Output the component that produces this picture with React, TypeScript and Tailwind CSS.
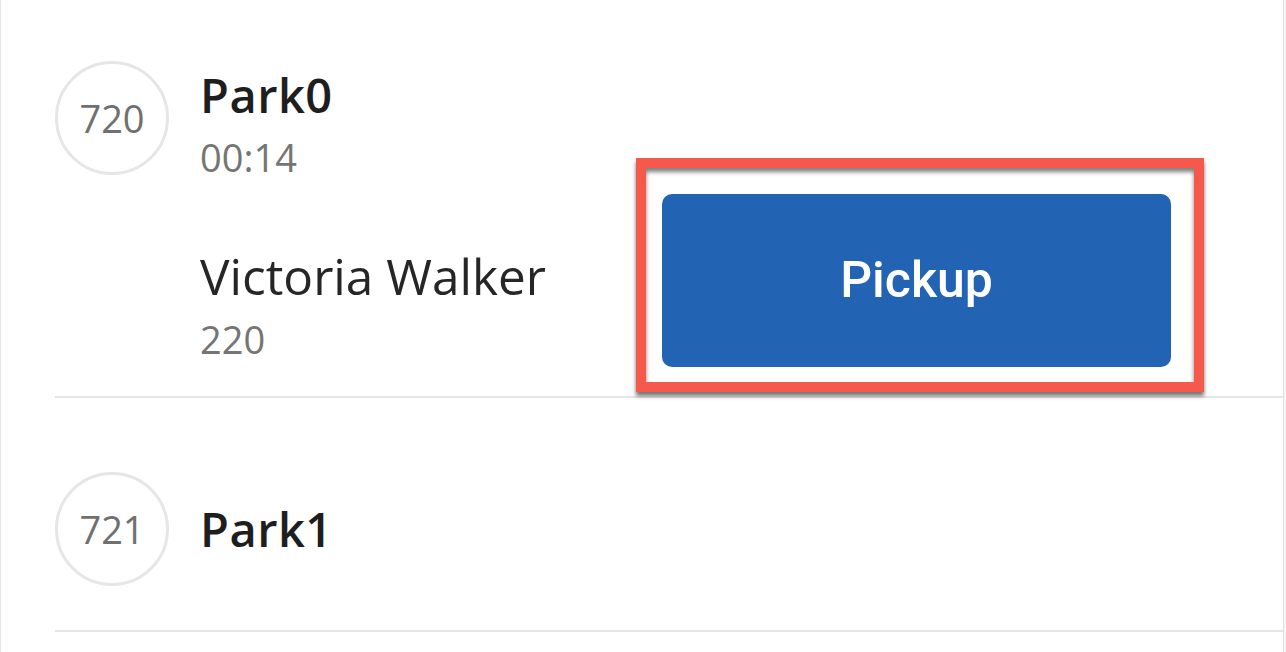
import React from "react";

const sans = { fontFamily: '"Open Sans", "Noto Sans", sans-serif' };

function Avatar({ n }: { n: string }) {
  return (
    <div className="w-[114px] h-[114px] shrink-0 rounded-full border-[3px] border-[#e6e6e6] flex items-center justify-center text-[38px] leading-none text-[#707070]">
      {n}
    </div>
  );
}

export default function App() {
  return (
    <div className="w-[1286px] h-[652px] bg-white overflow-hidden flex" style={sans}>
      <div className="w-[1283px] h-full border-l border-[#e4e4e4] pl-[54px] flex flex-col">
        {/* Item 1 */}
        <div className="h-[398px] shrink-0 border-b-2 border-[#e5e5e5] pt-[61px] flex items-start">
          <Avatar n="720" />
          <div className="ml-[31px] flex-1 pr-[112px] flex flex-col">
            <div className="mt-[8px] text-[47px] leading-[52px] font-semibold tracking-[0.5px] text-[#1e1e1e]">Park0</div>
            <div className="mt-[14px] text-[38px] leading-[44px] text-[#757575]">00:14</div>
            <div className="mt-[15px] flex items-end justify-between">
              <div className="mb-[6px] flex flex-col">
                <div className="text-[49.5px] leading-[58px] text-[#262626]">Victoria Walker</div>
                <div className="mt-[12px] text-[38px] leading-[44px] text-[#757575]">220</div>
              </div>
              <div className="relative">
                <button
                  className="w-[509px] h-[173px] rounded-[10px] bg-[#2264b3] text-white text-[50px] font-medium flex items-center justify-center"
                  style={{ fontFamily: 'Roboto, "Liberation Sans", sans-serif' }}
                >
                  Pickup
                </button>
                <div className="absolute -left-[26px] -top-[36px] -right-[33px] -bottom-[25px] border-[10px] border-[#f5594c] pointer-events-none shadow-[0_4px_4px_rgba(0,0,0,0.55),inset_0_4px_4px_rgba(0,0,0,0.5)]" />
              </div>
            </div>
          </div>
        </div>
        {/* Item 2 */}
        <div className="h-[234px] shrink-0 border-b-2 border-[#e5e5e5] pt-[74px] flex items-start">
          <Avatar n="721" />
          <div className="ml-[31px] h-[114px] flex items-center text-[47px] leading-[52px] font-semibold tracking-[0.5px] text-[#1e1e1e]">
            Park1
          </div>
        </div>
      </div>
      <div className="w-[1px] h-full bg-[#e0e0e0]" />
      <div className="flex-1 h-full bg-[#f6f6f6]" />
    </div>
  );
}
